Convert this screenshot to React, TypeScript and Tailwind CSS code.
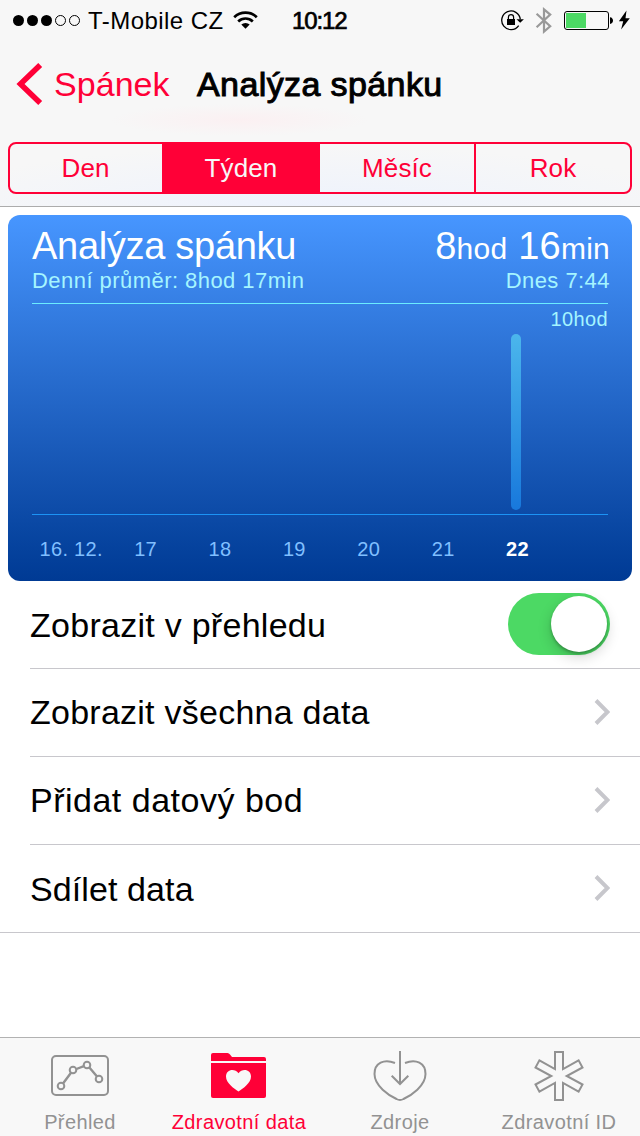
import React from 'react';

const days = ['16. 12.', '17', '18', '19', '20', '21', '22'];

function WifiIcon() {
  return (
    <svg className="ml-[9px] h-5 w-[26px]" viewBox="234 10 26 20" fill="none" stroke="#000" strokeWidth="2.7">
      <path d="M235.2 17.2a16.5 16.5 0 0 1 22.6 0" />
      <path d="M239.2 21.4a10.6 10.6 0 0 1 14.6 0" />
      <path d="M246.5 28.8l-4.2-4.2a6 6 0 0 1 8.4 0z" fill="#000" stroke="none" />
    </svg>
  );
}

function StatusBar() {
  return (
    <div className="flex h-10 items-center pl-3">
      <svg className="h-3 w-[70px]" viewBox="12 0 70 12">
        <circle cx="18.5" cy="6.5" r="5.5" />
        <circle cx="32.5" cy="6.5" r="5.5" />
        <circle cx="46.5" cy="6.5" r="5.5" />
        <circle cx="60.5" cy="6.5" r="5" fill="none" stroke="#000" />
        <circle cx="74.5" cy="6.5" r="5" fill="none" stroke="#000" />
      </svg>
      <span className="ml-[6px] w-[136px] pt-[2px] text-[24px] leading-[30px] tracking-[0.45px] whitespace-nowrap">T-Mobile CZ</span>
      <WifiIcon />
      <span className="ml-[33px] w-[60px] pt-[2px] text-[24px] leading-[30px] tracking-[-1.1px] whitespace-nowrap [-webkit-text-stroke:0.7px_#000]">10:12</span>
      <svg className="ml-[148px] h-10 w-[140px]" viewBox="500 0 140 40" fill="none">
        <path d="M518.700 25.600a9.300 9.300 0 1 1 1.600-6.200" stroke="#000" strokeWidth="1.3" />
        <path d="M516.500 19.200h7.400l-3.700 3.600z" fill="#000" />
        <path d="M507 19h8v6h-8z" fill="#000" />
        <path d="M508.400 19v-1.800a2.600 2.600 0 0 1 5.200 0V19" stroke="#000" strokeWidth="1.2" />
        <path d="M536.600 13.700l13.600 12.600-6.200 5.300V9.400l6.200 5.200-13.600 12.600" stroke="#999" strokeWidth="2.2" />
        <rect x="564.500" y="11.500" width="44" height="18" rx="2.500" stroke="#000" />
        <path d="M566 13h20v15h-20z" fill="#4cd964" />
        <path d="M610 17.200c4 .3 4 6.400 0 6.700z" fill="#000" />
        <path d="M626.500 10.500l-7.600 10.700h4.300l-2.100 8.300 8.700-11.300h-4.300z" fill="#000" />
      </svg>
    </div>
  );
}

function NavBar() {
  return (
    <div className="flex h-[88px] items-center text-[34px] leading-[40px] whitespace-nowrap">
      <svg className="ml-4 h-[42px] w-7" viewBox="0 0 28 42" fill="none">
        <path d="M24.200 2L4.500 21 24.200 40" stroke="#ff0037" strokeWidth="5.600" />
      </svg>
      <span className="ml-[10px] w-[117px] tracking-[0.05px] text-[#ff0037]">Spánek</span>
      <span className="ml-[26px] tracking-[0.4px] [-webkit-text-stroke:1px_#000]">Analýza spánku</span>
    </div>
  );
}

function Segments() {
  return (
    <div className="mx-2 mt-[14px] flex h-[52px] overflow-hidden rounded-[8px] border-2 border-[#ff0037] text-center text-[26px] leading-[48px] tracking-[0.1px] text-[#ff0037]">
      <div className="w-[152px] pr-[1px]">Den</div>
      <div className="w-[158px] bg-[#ff0037] text-[#f7f7f7]">Týden</div>
      <div className="w-[154px]">Měsíc</div>
      <div className="flex-1 border-l-2 border-[#ff0037]">Rok</div>
    </div>
  );
}

function ChartCard() {
  return (
    <section className="mx-2 mt-2 h-[366px] rounded-[12px] bg-linear-to-b from-[#4796ff] to-[#003a94] px-6 pt-[10px] text-white">
      <div className="flex h-[43px] items-baseline justify-between text-[38px] leading-[42px] whitespace-nowrap">
        <h2 className="tracking-[-0.3px]">Analýza spánku</h2>
        <p className="-mr-[2px] tracking-[0.250px]">8<span className="text-[30px]">hod</span> 16<span className="text-[30px]">min</span></p>
      </div>
      <div className="flex justify-between text-[22px] leading-[26px] tracking-[0.45px] whitespace-nowrap text-[#a5f5ff]">
        <span>Denní průměr: 8hod 17min</span>
        <span className="-mr-[2px]">Dnes 7:44</span>
      </div>
      <div className="mt-[9px] h-[212px] border-t border-b border-t-[#6becff] border-b-[#1c93f5] pt-[3px]">
        <div className="text-right text-[20px] leading-[24px] tracking-[0.4px] text-[#a5f5ff]">10hod</div>
        <div className="mt-[3px] ml-[479px] h-[176px] w-[10px] rounded-full bg-linear-to-b from-[#4bb6ec] to-[#1878dc]" />
      </div>
      <div className="mt-[22px] ml-[2px] flex text-center text-[20px] leading-[24px] tracking-[0.3px] whitespace-nowrap text-[#80bfff]">
        {days.map((day) => (
          <span key={day} className={day === '22' ? 'w-[74.400px] font-bold text-white' : 'w-[74.400px]'}>{day}</span>
        ))}
      </div>
    </section>
  );
}

type RowProps = { label: string; tracking: string; last?: boolean; toggle?: boolean };

function Row({ label, tracking, last = false, toggle = false }: RowProps) {
  const raised = !last && !toggle;
  return (
    <div className={last ? 'border-b border-[#c8c7cc] pl-[30px]' : 'pl-[30px]'}>
      <div className={last ? 'flex h-[87px] items-center justify-between pr-[30px]' : 'flex h-[88px] items-center justify-between border-b border-[#c8c7cc] pr-[30px]'}>
        <span className={`text-[34px] leading-[40px] whitespace-nowrap ${tracking} ${raised ? 'pb-[2px]' : ''}`}>{label}</span>
        {toggle ? (
          <div className="mb-[2px] flex h-[62px] w-[102px] items-center justify-end rounded-full bg-[#4cd964] pr-[3px]">
            <div className="h-14 w-14 rounded-full bg-white shadow-[0_5px_14px_rgba(0,0,0,0.18),0_2px_3px_rgba(0,0,0,0.25)]" />
          </div>
        ) : (
          <svg className="mb-[2px] h-[26px] w-4" viewBox="0 0 16 26" fill="none">
            <path d="M2 1.500L13.500 13 2 24.500" stroke="#c7c7cc" strokeWidth="4" />
          </svg>
        )}
      </div>
    </div>
  );
}

const heart = 'M238.500 1091.500C234 1088.500 226 1083 226 1076.500C226 1069.500 234.500 1068 238.500 1073.200C242.500 1068 251 1069.500 251 1076.500C251 1083 243 1088.500 238.500 1091.500z';

const tabs = [
  {
    label: 'Přehled',
    box: '40 1046 80 60',
    icon: (
      <g strokeWidth="2">
        <rect x="52" y="1056" width="56" height="39" rx="4" />
        <path d="M63 1083.500l8.200-11M76.400 1069l7.500-2.800M89.400 1067.500l7.400 8.800" strokeWidth="2.400" />
        <circle cx="61" cy="1086" r="3.300" />
        <circle cx="73" cy="1070" r="3.300" />
        <circle cx="87" cy="1065" r="3.300" />
        <circle cx="99" cy="1079" r="3.300" />
      </g>
    ),
  },
  {
    label: 'Zdravotní data',
    box: '199 1046 80 60',
    icon: (
      <g stroke="none" fill="#ff0037">
        <path d="M211 1061v-6q0-2 2-2h14.500q1.500 0 2.500 1.500l2 2.500h32q2 0 2 2v2z" />
        <path d="M211 1063h55v33q0 2-2 2h-51q-2 0-2-2z" />
        <path d={heart} fill="#f8f8f8" />
      </g>
    ),
  },
  {
    label: 'Zdroje',
    box: '360 1046 80 60',
    icon: (
      <g strokeWidth="2">
        <path d="M400 1051v32.500M391.700 1075.700l8.300 8.300 8.300-8.300" />
        <path d="M395 1063C384 1058.500 374.500 1063 374.500 1074C374.500 1086 389 1095.500 396.500 1099Q400 1101 403.500 1099C411 1095.500 425.500 1086 425.500 1074C425.500 1063 416 1058.500 405 1063" />
      </g>
    ),
  },
  {
    label: 'Zdravotní ID',
    box: '519 1046 80 60',
    icon: (
      <path strokeWidth="2" d="M555 1052h8v17l15.600-8.700 3.900 7.200-15.800 8.500 15.800 8.500-3.900 7.200-15.600-8.700v17h-8v-17l-15.600 8.700-3.900-7.200 15.800-8.500-15.800-8.500 3.900-7.200 15.600 8.700z" />
    ),
  },
];

function TabBar() {
  return (
    <nav className="mt-auto grid h-[99px] grid-cols-4 border-t border-[#b2b2b2] bg-[#f8f8f8]">
      {tabs.map((tab, i) => (
        <div key={tab.label} className={i === 1 ? 'flex flex-col items-center pr-[2px] text-[#ff0037]' : i === 3 ? 'flex flex-col items-center pr-[2px] text-[#929292]' : 'flex flex-col items-center text-[#929292]'}>
          <svg className="mt-2 h-[60px] w-20" viewBox={tab.box} fill="none" stroke="#929292">{tab.icon}</svg>
          <span className="mt-1 text-[20px] leading-[24px] tracking-[0.4px] whitespace-nowrap">{tab.label}</span>
        </div>
      ))}
    </nav>
  );
}

export default function App() {
  return (
    <div className="flex h-[1136px] w-[640px] flex-col overflow-hidden bg-white font-['Liberation_Sans',Arial,sans-serif] text-black">
      <header className="h-[207px] border-b border-[#acacac] bg-[#f7f7f7] bg-[radial-gradient(ellipse_130px_16px_at_240px_120px,#fbf0f2,transparent),radial-gradient(ellipse_400px_65px_at_310px_210px,#edf2fd,transparent)]">
        <StatusBar />
        <NavBar />
        <Segments />
      </header>
      <ChartCard />
      <main>
        <Row label="Zobrazit v přehledu" tracking="tracking-[0.27px]" toggle />
        <Row label="Zobrazit všechna data" tracking="tracking-[0.25px]" />
        <Row label="Přidat datový bod" tracking="tracking-[0.5px]" />
        <Row label="Sdílet data" tracking="tracking-[0.1px]" last />
      </main>
      <TabBar />
    </div>
  );
}
